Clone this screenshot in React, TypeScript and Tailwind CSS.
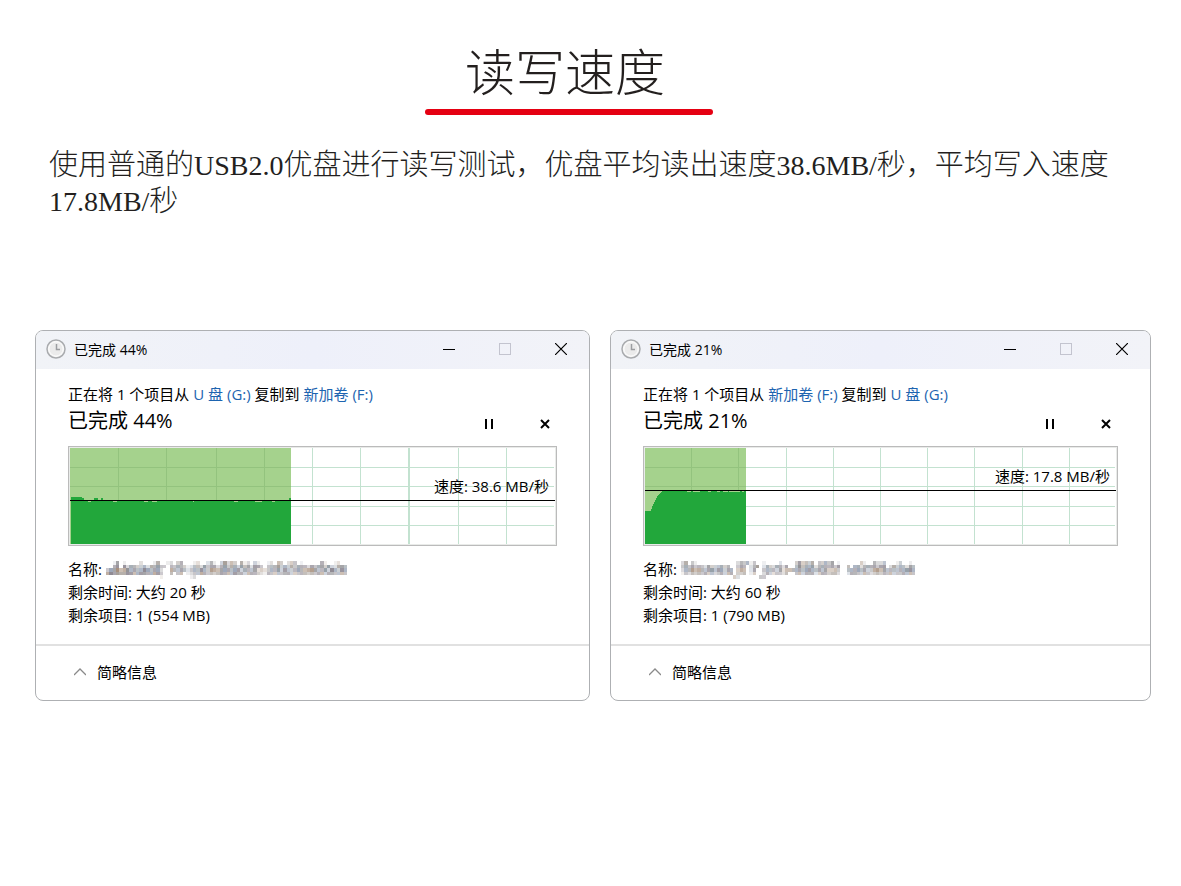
import React from "react";

type ChartData = {
  width: number;
  progress: number;
  speedY: number;
  columns: number[];
  area: string;
  dips: number[][];
};

type Transfer = {
  percent: number;
  from: string;
  to: string;
  speed: string;
  labelTop: string;
  timeLeft: string;
  itemsLeft: string;
  mosaicWidth: string;
  mosaic: string[];
  chart: ChartData;
};

const transfers: Transfer[] = [
  {
    percent: 44,
    from: "U 盘 (G:)",
    to: "新加卷 (F:)",
    speed: "38.6 MB/秒",
    labelTop: "top-[28px]",
    timeLeft: "大约 20 秒",
    itemsLeft: "1 (554 MB)",
    mosaicWidth: "w-[241px]",
    mosaic: [
      "001501000020001500120340001200241036243051203100120430233010000041001200",
      "004606254335254633043543124426355246355364525530344635353544253553632554",
      "365745655456645620054454235465365456546535445232354635434644565446365365",
      "565655654555455530040340123454343454445443444321433434433344343443443443",
      "000000000000000010000000012000000000000000000000000000000000000000000000",
    ],
    chart: {
      width: 489,
      progress: 223,
      speedY: 54,
      columns: [50, 98, 148, 196, 244, 292, 340, 341, 390, 438],
      area: "M3 98V51H14V52H16V54H26V52H30V54H33V52H35V54H221V52H223V98Z",
      dips: [[20, 3], [45, 4], [76, 4], [84, 5], [125, 1], [166, 4], [187, 7], [204, 3]],
    },
  },
  {
    percent: 21,
    from: "新加卷 (F:)",
    to: "U 盘 (G:)",
    speed: "17.8 MB/秒",
    labelTop: "top-[18px]",
    timeLeft: "大约 60 秒",
    itemsLeft: "1 (790 MB)",
    mosaicWidth: "w-[234px]",
    mosaic: [
      "250310000000000002435130010000200003534350335350100000031004224000130010",
      "353534325334534003540246025325425004645562454453500405524545355025354254",
      "254645445645635503540250035443524445546554545334300454645335645444445665",
      "132434343423434403340130024323324003434442344344200244334323434343334443",
      "000000000000000032000000330000000000000000000000000000000000000000000000",
    ],
    chart: {
      width: 475,
      progress: 103,
      speedY: 44,
      columns: [48, 95, 143, 190, 237, 284, 331, 379, 426],
      area: "M2 98V65H8L10 59L14 51L18 46L21 44H103V98Z",
      dips: [[44, 4], [50, 7], [65, 3], [74, 3], [80, 5], [86, 11], [99, 2]],
    },
  },
];

const tints = ["#6b6470", "#74818c", "#9a7f6a", "#6f6f73", "#7d8ba3", "#8a8078", "#77707d"];

function ClockIcon() {
  return (
    <svg className="size-5 shrink-0" viewBox="0 0 20 20" aria-hidden="true">
      <circle cx="10" cy="10" r="9" fill="#f6f6f6" stroke="#a9abae" strokeWidth="1.5" />
      <circle cx="10" cy="10" r="7" fill="#ebebeb" stroke="#fbfbfb" strokeWidth="1" />
      <path d="M10.5 5V10.5H14" fill="none" stroke="#9b9da0" strokeWidth="1.5" />
    </svg>
  );
}

function Mosaic({ rows, width }: { rows: string[]; width: string }) {
  return (
    <svg
      className={`h-[18px] ${width}`}
      viewBox="0 0 72 5"
      preserveAspectRatio="none"
      shapeRendering="crispEdges"
      role="img"
      aria-label="已隐藏"
    >
      {rows.map((row, y) =>
        row.split("").map((level, x) =>
          level === "0" ? null : (
            <rect
              key={`${x}-${y}`}
              x={x}
              y={y}
              width="1"
              height="1"
              fill={tints[(x * 5 + y * 3 + ((x * x) >> 2)) % tints.length]}
              opacity={Number(level) / 8}
            />
          ),
        ),
      )}
    </svg>
  );
}

function SpeedChart({ data, label, labelTop }: { data: ChartData; label: string; labelTop: string }) {
  const { width, progress, speedY, columns, area, dips } = data;
  return (
    <div className="relative mt-[10px] h-[100px]">
      <svg
        className="block h-full w-full"
        viewBox={`0 0 ${width} 100`}
        preserveAspectRatio="none"
        shapeRendering="crispEdges"
        aria-hidden="true"
      >
        <rect width={width} height="100" fill="#bbbbbb" />
        <rect x="1" y="1" width={width - 2} height="98" fill="#e9ebe9" />
        <rect x="2" y="2" width={width - 4} height="96" fill="#ffffff" />
        {columns.map((x) => (
          <rect key={x} x={x} y="2" width="1" height="96" fill="#c3e2d0" />
        ))}
        {[21, 40, 60, 79].map((y) => (
          <rect key={y} x="2" y={y} width={width - 5} height="1" fill="#c3e2d0" />
        ))}
        <rect x="2" y="2" width={progress - 2} height="96" fill="#a5d28d" />
        {columns
          .filter((x) => x < progress)
          .map((x) => (
            <rect key={x} x={x} y="2" width="1" height="96" fill="#93c37e" />
          ))}
        {[21, 40].map((y) => (
          <rect key={y} x="2" y={y} width={progress - 2} height="1" fill="#93c37e" />
        ))}
        <path d={area} fill="#22a73b" />
        {dips.map(([x, w]) => (
          <rect key={x} x={x} y={speedY + 1} width={w} height="1" fill="#a5d28d" />
        ))}
        <rect x="2" y={speedY} width={width - 4} height="1" fill="#000000" />
      </svg>
      <p className={`absolute right-2 ${labelTop} text-[15px] leading-6`}>速度: {label}</p>
    </div>
  );
}

function TransferWindow({ item }: { item: Transfer }) {
  return (
    <section className="overflow-hidden rounded-lg border border-[#aeb0b3] bg-white text-[15px] text-black">
      <header className="flex h-[38px] items-center bg-linear-to-r from-[#f1f3f7] via-[#eef0fa] to-[#f2f3f8] pb-0.5 pl-[10px]">
        <ClockIcon />
        <h2 className="ml-2 grow text-[14px]">已完成 {item.percent}%</h2>
        <button type="button" aria-label="最小化" className="flex h-full w-14 items-center justify-center">
          <svg className="size-3" viewBox="0 0 12 12" shapeRendering="crispEdges">
            <path d="M0 6.5H12" stroke="#000" />
          </svg>
        </button>
        <button type="button" aria-label="最大化" disabled className="flex h-full w-14 items-center justify-center">
          <svg className="size-3" viewBox="0 0 12 12" shapeRendering="crispEdges">
            <rect x="0.5" y="0.5" width="11" height="11" fill="none" stroke="#c3c4cf" />
          </svg>
        </button>
        <button type="button" aria-label="关闭" className="flex h-full w-14 items-center justify-center">
          <svg className="size-3" viewBox="0 0 12 12">
            <path d="M0 0L12 12M12 0L0 12" stroke="#000" strokeWidth="1.2" />
          </svg>
        </button>
      </header>

      <div className="px-8 pt-[13px] pb-[17px]">
        <p className="leading-6">
          正在将 1 个项目从{" "}
          <a href="#source" className="text-[#1d64b0]">{item.from}</a> 复制到{" "}
          <a href="#target" className="text-[#1d64b0]">{item.to}</a>
        </p>
        <div className="flex items-end gap-8">
          <p className="grow text-xl leading-[30px]">已完成 {item.percent}%</p>
          <button type="button" aria-label="暂停" className="flex size-6 items-center justify-center">
            <svg className="h-3 w-2" viewBox="0 0 8 12" shapeRendering="crispEdges">
              <path d="M0 1H2V11H0ZM6 1H8V11H6Z" fill="#000" />
            </svg>
          </button>
          <button type="button" aria-label="取消" className="flex size-6 items-center justify-center">
            <svg className="size-[10px]" viewBox="0 0 10 10">
              <path d="M1 1L9 9M9 1L1 9" stroke="#000" strokeWidth="2" />
            </svg>
          </button>
        </div>
        <SpeedChart data={item.chart} label={item.speed} labelTop={item.labelTop} />
        <div className="mt-3 leading-[23px]">
          <p className="flex items-center gap-1">
            名称: <Mosaic rows={item.mosaic} width={item.mosaicWidth} />
          </p>
          <p>剩余时间: {item.timeLeft}</p>
          <p>剩余项目: {item.itemsLeft}</p>
        </div>
      </div>

      <footer className="flex h-14 items-center border-t-2 border-[#e1e1e1] pb-0.5 pl-[38px]">
        <button type="button" className="flex items-center gap-[11px]">
          <svg className="h-2 w-3" viewBox="0 0 12 8" aria-hidden="true">
            <path d="M0 7L6 1L12 7" fill="none" stroke="#8a8a8a" strokeWidth="1.3" />
          </svg>
          简略信息
        </button>
      </footer>
    </section>
  );
}

export default function App() {
  return (
    <main className="min-h-screen bg-white pt-10 pr-[30px] pl-[35px] font-['Open_Sans','Noto_Sans_CJK_SC',sans-serif]">
      <header className="pr-12 text-center">
        <h1 className="inline-block pr-12 pl-10 font-['Noto_Sans_CJK_SC',sans-serif] text-[50px] leading-[59px] font-light text-[#231f1e]">
          读写速度
          <span className="mt-[10px] -mr-12 -ml-10 block h-[6px] rounded-full bg-[#e50012]" />
        </h1>
      </header>
      <p className="mt-8 pl-[14px] font-['Liberation_Serif','Noto_Sans_CJK_SC',serif] text-[29px] leading-9 font-light text-[#231f1e]">
        使用普通的<span className="text-[28px] leading-none font-normal">USB2.0</span>优盘进行读写测试，优盘平均读出速度
        <span className="text-[28px] leading-none font-normal">38.6MB/</span>秒，平均写入速度
        <span className="text-[28px] leading-none font-normal">17.8MB/</span>秒
      </p>
      <div className="mt-[111px] grid grid-cols-[555fr_541fr] gap-5">
        {transfers.map((item) => (
          <TransferWindow key={item.percent} item={item} />
        ))}
      </div>
    </main>
  );
}
